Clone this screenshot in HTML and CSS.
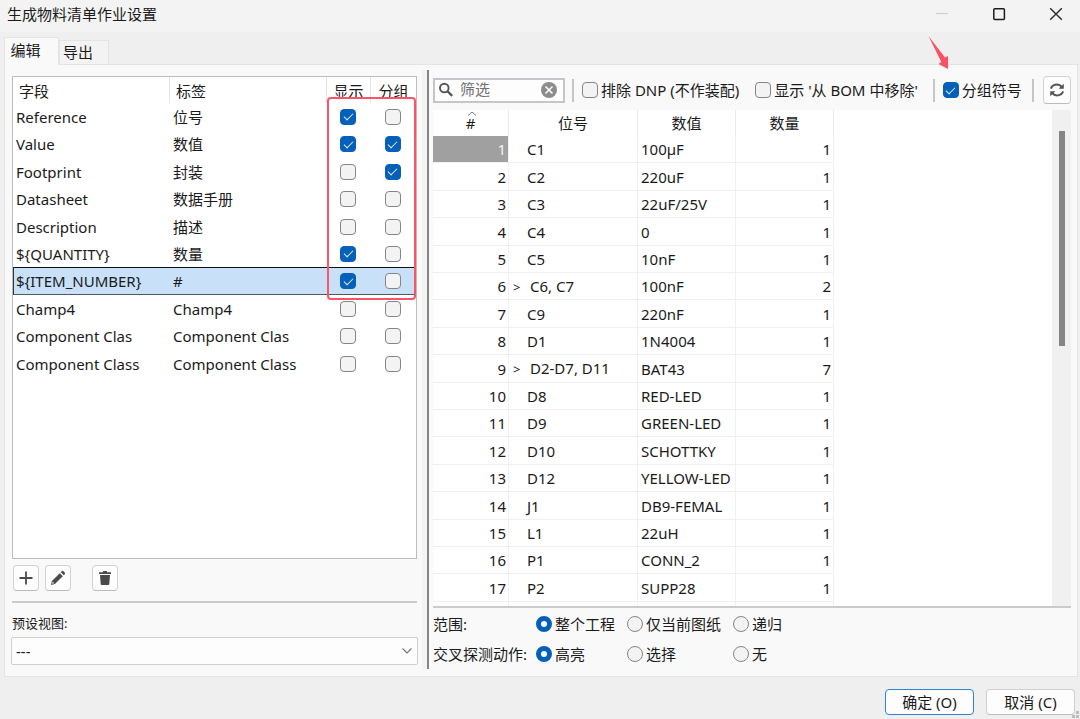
FILE: index.html
```html
<!DOCTYPE html>
<html lang="zh-CN">
<head>
<meta charset="utf-8">
<title>生成物料清单作业设置</title>
<link rel="stylesheet" href="styles.css">
</head>
<body>
<header class="titlebar">
  <h1 class="title">生成物料清单作业设置</h1>
  <div class="window-buttons">
    <button class="win-btn" aria-label="最小化" disabled><svg width="14" height="14" viewBox="0 0 14 14"><path d="M1 6.500h12" stroke="#cfcfcf" stroke-width="1.2"/></svg></button>
    <button class="win-btn" aria-label="最大化"><svg width="14" height="14" viewBox="0 0 14 14"><rect x="1.8" y="1.8" width="10.6" height="10.6" rx="1" fill="none" stroke="#1c1c1c" stroke-width="1.5"/></svg></button>
    <button class="win-btn" aria-label="关闭"><svg width="14" height="14" viewBox="0 0 14 14"><path d="M1.2 1.2l11.6 11.6M12.8 1.2L1.2 12.8" stroke="#2a2a2a" stroke-width="1.4"/></svg></button>
  </div>
</header>

<nav class="tabs" role="tablist">
  <button class="tab tab-active" role="tab" aria-selected="true">编辑</button>
  <button class="tab" role="tab" aria-selected="false">导出</button>
</nav>

<main class="panel">
  <section class="left">
    <div class="field-list">
      <table class="fields">
        <colgroup><col class="c-field"><col class="c-label"><col class="c-show"><col class="c-group"></colgroup>
        <thead><tr><th>字段</th><th>标签</th><th class="mid">显示</th><th class="mid">分组</th></tr></thead>
        <tbody>
          <tr><td>Reference</td><td>位号</td><td class="mid"><input type="checkbox" class="check" aria-label="显示 Reference" checked></td><td class="mid"><input type="checkbox" class="check" aria-label="分组 Reference"></td></tr>
          <tr><td>Value</td><td>数值</td><td class="mid"><input type="checkbox" class="check" aria-label="显示 Value" checked></td><td class="mid"><input type="checkbox" class="check" aria-label="分组 Value" checked></td></tr>
          <tr><td>Footprint</td><td>封装</td><td class="mid"><input type="checkbox" class="check" aria-label="显示 Footprint"></td><td class="mid"><input type="checkbox" class="check" aria-label="分组 Footprint" checked></td></tr>
          <tr><td>Datasheet</td><td>数据手册</td><td class="mid"><input type="checkbox" class="check" aria-label="显示 Datasheet"></td><td class="mid"><input type="checkbox" class="check" aria-label="分组 Datasheet"></td></tr>
          <tr><td>Description</td><td>描述</td><td class="mid"><input type="checkbox" class="check" aria-label="显示 Description"></td><td class="mid"><input type="checkbox" class="check" aria-label="分组 Description"></td></tr>
          <tr><td>${QUANTITY}</td><td>数量</td><td class="mid"><input type="checkbox" class="check" aria-label="显示 QUANTITY" checked></td><td class="mid"><input type="checkbox" class="check" aria-label="分组 QUANTITY"></td></tr>
          <tr class="selected"><td>${ITEM_NUMBER}</td><td>#</td><td class="mid"><input type="checkbox" class="check" aria-label="显示 ITEM_NUMBER" checked></td><td class="mid"><input type="checkbox" class="check" aria-label="分组 ITEM_NUMBER"></td></tr>
          <tr><td>Champ4</td><td>Champ4</td><td class="mid"><input type="checkbox" class="check" aria-label="显示 Champ4"></td><td class="mid"><input type="checkbox" class="check" aria-label="分组 Champ4"></td></tr>
          <tr><td>Component Clas</td><td>Component Clas</td><td class="mid"><input type="checkbox" class="check" aria-label="显示 Component Clas"></td><td class="mid"><input type="checkbox" class="check" aria-label="分组 Component Clas"></td></tr>
          <tr><td>Component Class</td><td>Component Class</td><td class="mid"><input type="checkbox" class="check" aria-label="显示 Component Class"></td><td class="mid"><input type="checkbox" class="check" aria-label="分组 Component Class"></td></tr>
        </tbody>
      </table>
      <div class="highlight-box"></div>
    </div>
    <div class="list-actions">
      <button class="icon-btn" aria-label="添加"><svg width="16" height="16" viewBox="0 0 16 16"><path d="M8 1.5v13M1.5 8h13" stroke="#4a4a4a" stroke-width="1.8"/></svg></button>
      <button class="icon-btn" aria-label="编辑字段"><svg width="16" height="16" viewBox="0 0 16 16"><path d="M9.800 3.200l3 3-7.900 7.900-3.900.9.900-3.900z" fill="#4a4a4a"/><path d="M10.800 2.200l1.100-1.100q.7-.5 1.300 0l1.700 1.700q.5.700 0 1.300l-1.100 1.100z" fill="#4a4a4a"/><path d="M2.700 11.700l1.600 1.600-2.100.5z" fill="#fff"/></svg></button>
      <button class="icon-btn icon-btn-apart" aria-label="删除"><svg width="16" height="16" viewBox="0 0 16 16"><path d="M2 2.200h3.600L6.400 1h3.200l.8 1.200H14V4H2zM3 5h10l-.7 9q-.1 1-1 1H4.700q-.9 0-1-1z" fill="#4a4a4a"/></svg></button>
    </div>
    <hr class="divider">
    <label class="preset-label" for="preset">预设视图:</label>
    <div class="preset">
      <select id="preset" class="preset-select"><option>---</option></select>
      <svg class="chevron" width="12" height="8" viewBox="0 0 12 8"><path d="M1.500 1.500L6 6l4.500-4.500" fill="none" stroke="#777" stroke-width="1.200"/></svg>
    </div>
  </section>

  <div class="splitter"></div>

  <section class="right">
    <div class="toolbar">
      <div class="search">
        <svg width="16" height="16" viewBox="0 0 16 16"><circle cx="6.300" cy="6" r="4.300" fill="none" stroke="#555" stroke-width="1.900"/><path d="M9.500 9.200l4.700 4.700" stroke="#555" stroke-width="2.300"/></svg>
        <input class="search-input" type="text" placeholder="筛选" aria-label="筛选">
        <button class="clear" aria-label="清除"><svg width="16" height="16" viewBox="0 0 16 16"><circle cx="8" cy="8" r="8" fill="#8c8c8c"/><path d="M4.500 4.500l7 7M11.500 4.500l-7 7" stroke="#fff" stroke-width="1.500"/></svg></button>
      </div>
      <span class="sep"></span>
      <label class="option option-wide"><input type="checkbox" class="check">排除 DNP (不作装配)</label>
      <label class="option option-last"><input type="checkbox" class="check">显示 '从 BOM 中移除'</label>
      <span class="sep"></span>
      <label class="option"><input type="checkbox" class="check" checked>分组符号</label>
      <span class="sep sep-end"></span>
      <button class="refresh" aria-label="刷新"><svg width="16" height="16" viewBox="0 0 16 16"><path d="M1.800 6.600Q3.600 2.600 8 2.600q3 0 4.800 2.200M14.200 9.400Q12.400 13.400 8 13.400q-3 0-4.800-2.200" fill="none" stroke="#555" stroke-width="2"/><path d="M14.800 1.800v5H9.600zM1.200 14.200v-5h5.200z" fill="#555"/></svg></button>
      <svg class="arrow" width="24" height="36" viewBox="0 0 24 36"><path d="M1.500 1L18 22.500l3-1.500v13L11.500 29l2.800-2z" fill="#fd5062"/></svg>
    </div>
    <div class="preview">
      <div class="preview-body">
        <table class="parts">
          <colgroup><col class="p-num"><col class="p-ref"><col class="p-val"><col class="p-qty"></colgroup>
          <thead><tr><th class="sorted">#<svg class="caret" width="10" height="5" viewBox="0 0 10 5"><path d="M1 4.500L5 1l4 3.500" fill="none" stroke="#777"/></svg></th><th>位号</th><th>数值</th><th>数量</th></tr></thead>
          <tbody>
            <tr><td class="current">1</td><td>C1</td><td>100µF</td><td>1</td></tr>
            <tr><td>2</td><td>C2</td><td>220uF</td><td>1</td></tr>
            <tr><td>3</td><td>C3</td><td>22uF/25V</td><td>1</td></tr>
            <tr><td>4</td><td>C4</td><td>0</td><td>1</td></tr>
            <tr><td>5</td><td>C5</td><td>10nF</td><td>1</td></tr>
            <tr><td>6</td><td class="grouped"><span class="expand">&gt;</span>C6, C7</td><td>100nF</td><td>2</td></tr>
            <tr><td>7</td><td>C9</td><td>220nF</td><td>1</td></tr>
            <tr><td>8</td><td>D1</td><td>1N4004</td><td>1</td></tr>
            <tr><td>9</td><td class="grouped"><span class="expand">&gt;</span>D2-D7, D11</td><td>BAT43</td><td>7</td></tr>
            <tr><td>10</td><td>D8</td><td>RED-LED</td><td>1</td></tr>
            <tr><td>11</td><td>D9</td><td>GREEN-LED</td><td>1</td></tr>
            <tr><td>12</td><td>D10</td><td>SCHOTTKY</td><td>1</td></tr>
            <tr><td>13</td><td>D12</td><td>YELLOW-LED</td><td>1</td></tr>
            <tr><td>14</td><td>J1</td><td>DB9-FEMAL</td><td>1</td></tr>
            <tr><td>15</td><td>L1</td><td>22uH</td><td>1</td></tr>
            <tr><td>16</td><td>P1</td><td>CONN_2</td><td>1</td></tr>
            <tr><td>17</td><td>P2</td><td>SUPP28</td><td>1</td></tr>
            <tr><td></td><td></td><td></td><td></td></tr>
          </tbody>
        </table>
      </div>
      <div class="scrollbar"><div class="thumb"></div></div>
    </div>
    <div class="choices">
      <span id="scope">范围:</span>
      <label class="option"><input type="radio" class="radio" name="scope" aria-describedby="scope" checked>整个工程</label>
      <label class="option"><input type="radio" class="radio" name="scope" aria-describedby="scope">仅当前图纸</label>
      <label class="option"><input type="radio" class="radio" name="scope" aria-describedby="scope">递归</label>
      <span id="probe">交叉探测动作:</span>
      <label class="option"><input type="radio" class="radio" name="probe" aria-describedby="probe" checked>高亮</label>
      <label class="option"><input type="radio" class="radio" name="probe" aria-describedby="probe">选择</label>
      <label class="option"><input type="radio" class="radio" name="probe" aria-describedby="probe">无</label>
    </div>
  </section>
</main>

<footer class="footer">
  <button class="dialog-btn dialog-btn-default">确定 (O)</button>
  <button class="dialog-btn">取消 (C)</button>
  <svg class="grip" width="8" height="8" viewBox="0 0 8 8"><path d="M4 0h3v3H4zM0 4h3v3H0zM4 4h3v3H4z" fill="#bdbdbd"/></svg>
</footer>
</body>
</html>
```
FILE: styles.css
```css
* { box-sizing: border-box; }

body {
  margin: 0;
  height: 100vh;
  display: flex;
  flex-direction: column;
  background: #efefef;
  color: #1a1a1a;
  font: 15px/20px "Noto Sans", "Noto Sans CJK SC", sans-serif;
  overflow: hidden;
}

button, input, select { font: inherit; color: inherit; margin: 0; padding: 0; }
svg { display: block; flex: none; }

/* Title bar */
.titlebar {
  display: flex;
  justify-content: space-between;
  align-items: center;
  height: 32px;
  padding: 0 17px 5px 7px;
  background: #f3f3f3;
}
.title { margin: 0; font-size: 15px; font-weight: 400; }
.window-buttons { display: flex; gap: 43px; }
.win-btn { border: 0; background: none; }

/* Tabs */
.tabs {
  display: flex;
  align-items: flex-end;
  padding: 5px 4px 0;
}
.tab {
  height: 24px;
  width: 50px;
  padding: 0 12px 2px 0;
  border: 1px solid #e4e4e4;
  border-bottom: 0;
  background: #f3f3f3;
}
.tab-active {
  height: 28px;
  width: 55px;
  margin-bottom: -1px;
  padding-bottom: 4px;
  background: #f9f9f9;
  z-index: 1;
}

.panel {
  flex: 1;
  min-height: 0;
  display: flex;
  margin: 0 2px 0 4px;
  padding: 5px 6px 7px 7px;
  border: 1px solid #e4e4e4;
  background: #f9f9f9;
}

/* Field list */
.left {
  flex: none;
  width: 405px;
  display: flex;
  flex-direction: column;
  padding-top: 6px;
}
.field-list {
  flex: 1;
  min-height: 0;
  position: relative;
  border: 1px solid #b9bcc0;
  background: #fff;
}
table { border-collapse: separate; border-spacing: 0; table-layout: fixed; }
th, td { font-weight: 400; padding: 0; white-space: nowrap; }
.fields { width: 100%; }
.c-field { width: 157px; }
.c-label { width: 157px; }
.c-show { width: 44px; }
.fields th { height: 26px; padding: 2px 0 0 6px; text-align: left; border-right: 1px solid #e5e5e5; }
.fields th:last-child { border-right: 0; }
.fields td { height: 27px; padding: 0 0 0 3px; }
.fields th.mid, .fields td.mid { padding-left: 0; text-align: center; }
.fields td.mid { padding-right: 2px; }
tbody tr:nth-child(5n + 2) td, tbody tr:nth-child(5n + 4) td { height: 28px; }
.selected td {
  background: #c8e1f8;
  border-top: 1px solid #111;
  border-bottom: 1px solid #555;
}
.selected td:first-child { border-left: 1px solid #333; padding-left: 2px; }

.check, .radio {
  appearance: none;
  flex: none;
  width: 16px;
  height: 16px;
  border: 1px solid #858585;
  background: #f3f3f3;
}
.check { border-radius: 4px; display: inline-grid; place-items: center; vertical-align: middle; }
.fields .check { display: grid; margin: 0 auto; }
.check:checked { background: #0560b9; border-color: #0560b9; }
.check:checked::after {
  content: "";
  width: 8px;
  height: 4px;
  margin-bottom: 2px;
  border: solid #dcebf8;
  border-width: 0 0 1px 1px;
  transform: rotate(-45deg);
}
.radio { border-radius: 50%; }
.radio:checked { border: 5px solid #0560b9; background: #fff; }

.highlight-box {
  position: absolute;
  top: 20px;
  right: 0;
  width: 89px;
  height: 203px;
  border: 2px solid #f95468;
  border-radius: 4px;
  pointer-events: none;
}

.list-actions { display: flex; gap: 6px; padding: 6px 1px 10px; }
.icon-btn, .refresh {
  display: grid;
  place-items: center;
  width: 26px;
  height: 26px;
  border: 1px solid #d2d2d2;
  border-bottom-color: #bcbcbc;
  border-radius: 4px;
  background: #fdfdfd;
}
.icon-btn-apart { margin-left: 15px; }
.divider { width: 100%; margin: 0; border: 0; border-top: 2px solid #cbcbcb; }
.preset-label { font-size: 13px; padding: 10px 0 4px; }
.preset { position: relative; margin: 0 -1px 4px; }
.preset-select {
  appearance: none;
  width: 100%;
  height: 28px;
  padding-left: 4px;
  border: 1px solid #cfcfcf;
  border-radius: 2px;
  background: #fdfdfd;
}
.chevron { position: absolute; right: 5px; top: 10px; }

.splitter {
  flex: none;
  width: 7px;
  margin: 0 4px 0 5px;
  border-right: 2px solid #858585;
  background: #f3f3f3;
}

/* Preview */
.right { flex: 1; min-width: 0; display: flex; flex-direction: column; }
.toolbar {
  position: relative;
  display: flex;
  align-items: center;
  height: 40px;
  white-space: nowrap;
}
.search {
  display: flex;
  align-items: center;
  width: 132px;
  height: 25px;
  padding: 0 6px 0 3px;
  border: 2px solid #c4c6ca;
  background: #fdfdfd;
}
.search-input {
  flex: 1;
  min-width: 0;
  height: 21px;
  margin: 0 0 3px 6px;
  border: 0;
  outline: 0;
  background: none;
}
.search-input::placeholder { color: #707070; opacity: 1; }
.clear { border: 0; background: none; }
.sep { width: 2px; height: 23px; margin: 0 8px 0 7px; background: #c6c6c6; }
.option { display: flex; align-items: center; gap: 3px; }
.option-wide { margin-right: 16px; }
.option-last { margin-right: 8px; }
.sep-end { margin: 0 8px 0 10px; }
.refresh { width: 28px; height: 28px; margin-left: auto; }
.arrow { position: absolute; left: 494px; top: -35px; }

.preview {
  flex: 1;
  min-height: 0;
  display: flex;
  border-bottom: 2px solid #cbcbcb;
  background: #fff;
}
.preview-body { flex: 1; min-width: 0; overflow: hidden; }
.parts { width: 401px; }
.p-num { width: 76px; }
.p-ref { width: 129px; }
.p-val { width: 98px; }
.parts th { position: relative; height: 26px; border-right: 1px solid #ebebeb; }
.caret { position: absolute; left: 34px; top: 1px; }
.parts td {
  height: 27px;
  border-right: 1px solid #f0f0f0;
  border-bottom: 1px solid #f0f0f0;
}
.parts td:nth-child(1), .parts td:nth-child(4) { text-align: right; padding-right: 2px; }
.parts td:nth-child(2) { padding-left: 18px; }
.parts td:nth-child(3) { padding-left: 3px; }
.parts td.grouped { padding-left: 4px; }
.parts td.current { background: #a0a0a0; color: #f2f2f2; }
.expand { display: inline-block; width: 17px; font-size: 13px; }
.scrollbar { width: 19px; padding: 21px 6px 0 7px; background: #f0f0f0; }
.thumb { width: 6px; height: 215px; background: #858585; }

.choices {
  display: grid;
  grid-template-columns: 103px 91px 106px 1fr;
  grid-auto-rows: 30px;
  align-items: center;
  padding-top: 1px;
  white-space: nowrap;
}

/* Dialog buttons */
.footer {
  position: relative;
  display: flex;
  justify-content: flex-end;
  gap: 12px;
  padding: 12px 5px 4px;
}
.dialog-btn {
  width: 89px;
  height: 26px;
  border: 1px solid #d0d0d0;
  border-bottom-color: #bcbcbc;
  border-radius: 4px;
  background: #fdfdfd;
}
.dialog-btn-default { border-color: #2f83cf; }
.grip { position: absolute; right: 0; bottom: 0; }
```
